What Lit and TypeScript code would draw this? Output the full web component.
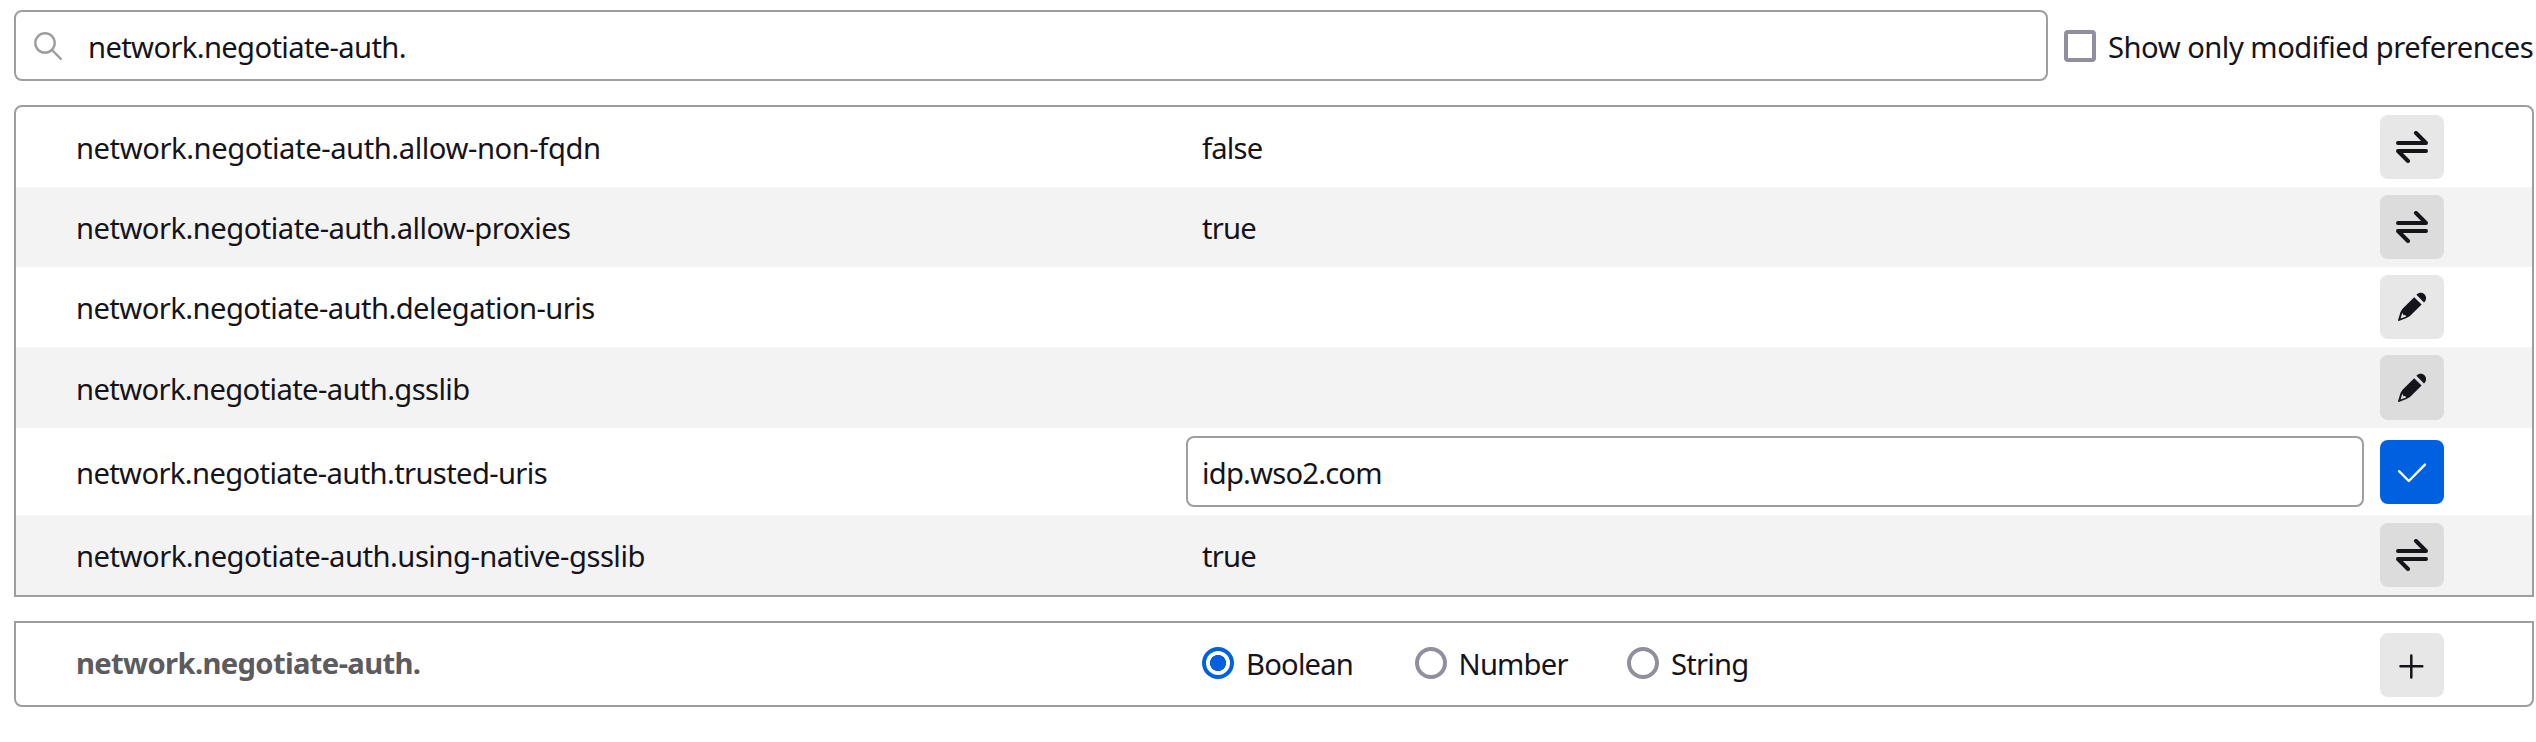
import { LitElement, html, css, svg } from "lit";
import { customElement } from "lit/decorators.js";

type Pref = { name: string; value: string; action: "toggle" | "edit" | "save"; cls: string; fit: number };

const prefs: Pref[] = [
  { name: "network.negotiate-auth.allow-non-fqdn", value: "false", action: "toggle", cls: "", fit: -0.44 },
  { name: "network.negotiate-auth.allow-proxies", value: "true", action: "toggle", cls: "", fit: -0.53 },
  { name: "network.negotiate-auth.delegation-uris", value: "", action: "edit", cls: "", fit: -0.57 },
  { name: "network.negotiate-auth.gsslib", value: "", action: "edit", cls: "tall", fit: -0.63 },
  { name: "network.negotiate-auth.trusted-uris", value: "idp.wso2.com", action: "save", cls: "editing", fit: -0.64 },
  { name: "network.negotiate-auth.using-native-gsslib", value: "true", action: "toggle", cls: "", fit: -0.5 },
];

const icons = {
  toggle: svg`<g fill="none" stroke="currentColor" stroke-width="4" stroke-linecap="round" stroke-linejoin="round"><path d="M2 12H30L20 2"/><path d="M30 20H2L12 30"/></g>`,
  edit: svg`<path fill="currentColor" fill-rule="evenodd" d="M20.400 3.800C22.800 1.200 26.600 1.200 28.700 3.400C30.700 5.600 30.500 9.300 28 11.600ZM18.200 6.200L25.600 13.600L14 25L10.500 27L2.800 30Q2 30.200 2 29.200L4.500 21L6.300 18ZM6.300 21.800L4.600 27.600L10.200 25.400L9.200 24L7.500 24.300Z"/>`,
  save: svg`<path d="M3 15.200L12.800 25L29 8.600" fill="none" stroke="currentColor" stroke-width="2.400" stroke-linecap="round" stroke-linejoin="round"/>`,
  add: svg`<path d="M15.300 6.500V28.500M4.500 17.300H26.300" fill="none" stroke="currentColor" stroke-width="2.500" stroke-linecap="round"/>`,
};

@customElement("app-root")
export class AppRoot extends LitElement {
  static styles = css`
    :host { display: block; box-sizing: border-box; width: 2536px; height: 742px; padding: 10px 0 0 14px;
      background: #fff; color: #15141a; font: 29.2px/40px "Noto Sans", sans-serif; overflow: hidden; }
    * { box-sizing: border-box; }
    .top { display: flex; align-items: flex-start; width: 2522px; }
    .search { display: flex; flex: none; align-items: center; width: 2034px; height: 71px; border: 2px solid #9e9e9f; border-radius: 8px; padding-left: 18px; }
    .search svg { width: 28px; height: 28px; margin: 1px 26px 0 0; color: #9e9e9f; }
    .check { display: flex; flex: none; align-items: center; height: 71px; margin-left: 16px; }
    .box { width: 32px; height: 32px; border: 4px solid #8f8f9d; border-radius: 4px; margin: 1px 12px 0 0; }
    .t { white-space: nowrap; padding-top: 2px; letter-spacing: -0.65px; }
    .wide { letter-spacing: -0.5px; }
    .table { width: 2520px; border: 2px solid #9e9e9f; border-radius: 8px 8px 0 0; margin-top: 24px; overflow: hidden; }
    .add { border-radius: 0 0 8px 8px; }
    .row { display: grid; grid-template-columns: 1170px 1194px 64px; align-items: center; height: 80px; }
    .row:nth-child(even) { background: #f3f3f3; }
    .tall { height: 81px; }
    .tall .btn { height: 65px; }
    .editing { height: 87px; }
    .name { display: flex; padding-left: 60px; }
    .value { display: flex; padding-left: 16px; margin-right: 16px; }
    .value .t { letter-spacing: -0.8px; }
    .value.input { align-items: center; height: 71px; border: 2px solid #9e9e9f; border-radius: 8px; padding-left: 14px; }
    .btn { width: 64px; height: 64px; border: 0; padding: 16px; border-radius: 8px; background: rgba(21,20,26,.1); color: #15141a; }
    .btn svg { display: block; width: 32px; height: 32px; }
    .save { background: #0061e0; color: #fff; }
    .addrow { height: 82px; }
    .addrow .btn { margin-top: 2px; }
    .bold { font-weight: 700; color: #5b5b60; margin-top: -5px; }
    .radios { align-items: center; }
    .radio { display: flex; align-items: center; width: 212.500px; }
    .radio .t { padding-top: 0; }
    .dot { width: 32px; height: 32px; border: 4px solid #8f8f9d; border-radius: 50%; margin: -2px 12px 0 0; }
    .on { border-color: #0061e0; background: radial-gradient(circle, #0061e0 7.800px, #fff 8.300px); }
  `;

  render() {
    return html`
      <div class="top">
        <div class="search">
          <svg viewBox="0 0 28 28"><g fill="none" stroke="currentColor" stroke-width="2.400" stroke-linecap="round"><circle cx="11" cy="11" r="9.700"/><path d="M18 18L26.800 26.800"/></g></svg>
          <span class="t">network.negotiate-auth.</span>
        </div>
        <label class="check"><span class="box"></span><span class="t wide">Show only modified preferences</span></label>
      </div>
      <div class="table">
        ${prefs.map((p) => html`<div class="row ${p.cls}">
          <span class="name"><span class="t" style="letter-spacing:${p.fit}px">${p.name}</span></span>
          <span class="value ${p.action === "save" ? "input" : ""}"><span class="t">${p.value}</span></span>
          <button class="btn ${p.action}"><svg viewBox="0 0 32 32">${icons[p.action]}</svg></button>
        </div>`)}
      </div>
      <div class="table add">
        <div class="row addrow">
          <span class="name bold"><span class="t">network.negotiate-auth.</span></span>
          <span class="value radios">
            <label class="radio"><span class="dot on"></span><span class="t">Boolean</span></label>
            <label class="radio"><span class="dot"></span><span class="t">Number</span></label>
            <label class="radio"><span class="dot"></span><span class="t">String</span></label>
          </span>
          <button class="btn"><svg viewBox="0 0 32 32">${icons.add}</svg></button>
        </div>
      </div>`;
  }
}
